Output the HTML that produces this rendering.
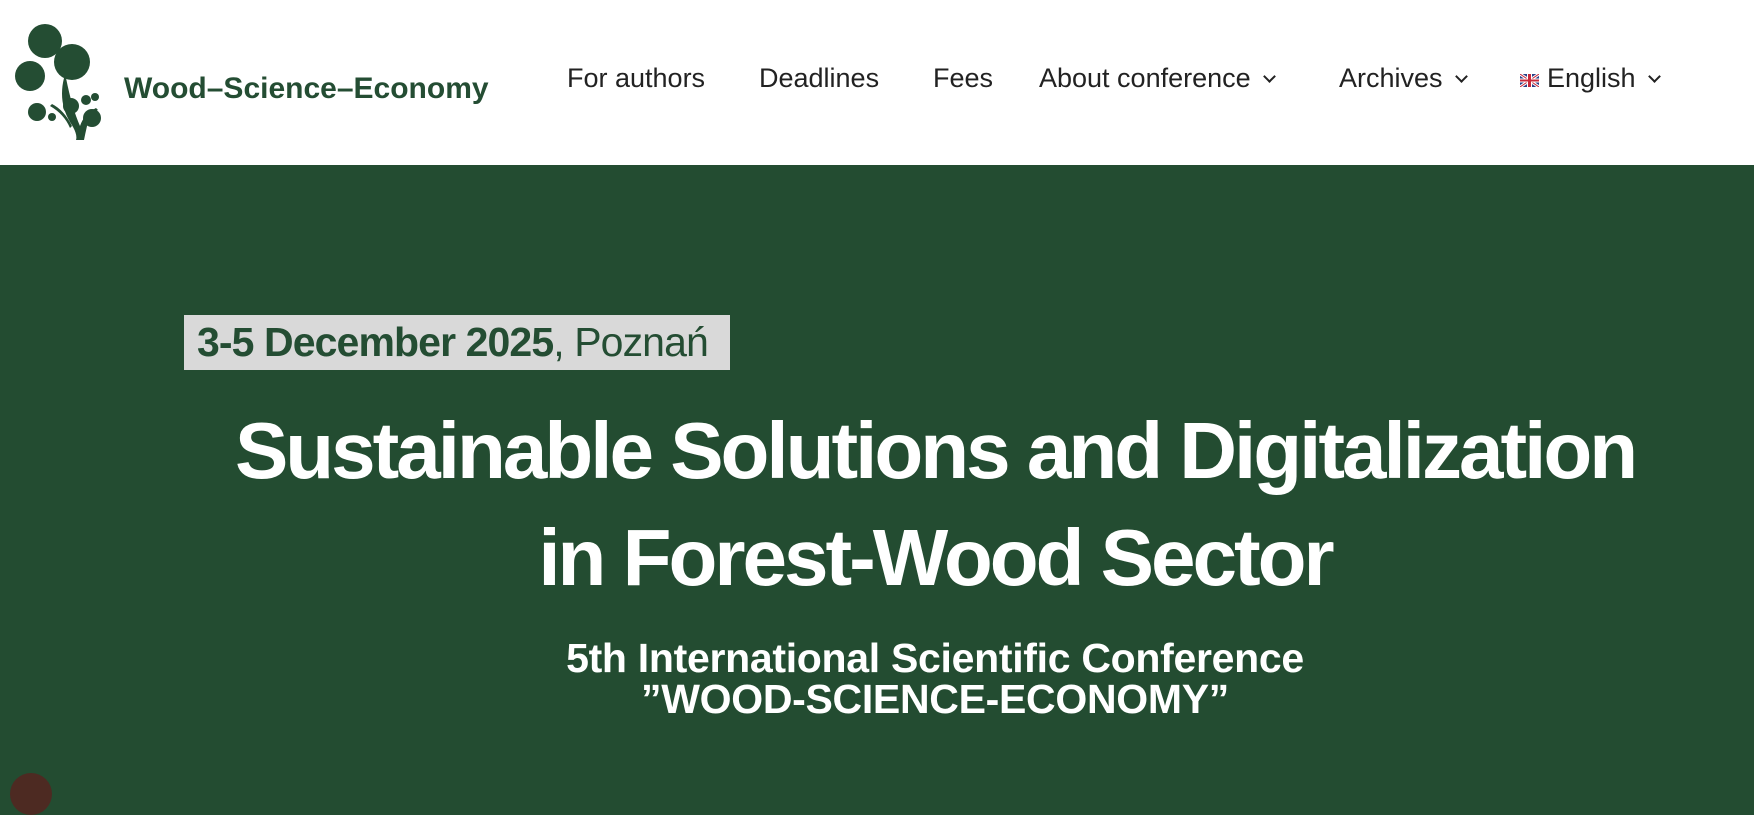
<!DOCTYPE html>
<html><head><meta charset="utf-8"><style>
*{margin:0;padding:0;box-sizing:border-box}
body{width:1754px;height:781px;overflow:hidden;font-family:"Liberation Sans",sans-serif;background:#234c31;position:relative}
.hdr{position:absolute;left:0;top:0;width:1754px;height:165px;background:#fff}
.logo{position:absolute;left:14px;top:22px}
.brand{position:absolute;left:124px;top:72px;font-size:30px;font-weight:bold;color:#244d33;letter-spacing:0px}
.nav{position:absolute;top:63px;font-size:27px;color:#222;white-space:nowrap}
.chev{display:inline-block;width:9px;height:9px;border-right:2px solid #222;border-bottom:2px solid #222;transform:rotate(45deg);margin-left:14px;position:relative;top:-6px}
.date{position:absolute;left:184px;top:315px;width:546px;height:55px;background:#d9d9d9;color:#244d33;font-size:41px;line-height:55px;padding-left:13px;letter-spacing:-0.9px;white-space:nowrap}
.h1{position:absolute;left:0;width:1754px;text-align:center;color:#fff;font-weight:bold;font-size:80px;letter-spacing:-3px;white-space:nowrap;padding-left:116px}
.sub{position:absolute;left:0;width:1754px;text-align:center;color:#fff;font-weight:bold;font-size:41px;letter-spacing:-0.3px;white-space:nowrap;padding-left:116px}
.dot{position:absolute;left:10px;top:773px;width:42px;height:42px;border-radius:50%;background:#4d2a22}
</style></head><body>
<div class="hdr">
<svg class="logo" width="90" height="118" viewBox="0 0 90 118">
<circle cx="31" cy="19" r="17" fill="#244d33"/>
<circle cx="58" cy="40" r="18" fill="#244d33"/>
<circle cx="16" cy="54" r="15" fill="#244d33"/>
<circle cx="23" cy="90" r="9" fill="#244d33"/>
<circle cx="38" cy="95" r="4" fill="#244d33"/>
<circle cx="57" cy="84" r="8" fill="#244d33"/>
<circle cx="72" cy="78" r="5" fill="#244d33"/>
<circle cx="81" cy="75" r="4" fill="#244d33"/>
<circle cx="78" cy="96" r="9" fill="#244d33"/>
<path d="M50 56 Q44 80 56 100 Q64 112 62 118 L70 118 Q72 108 74 100 Q78 90 84 88 L82 86 Q70 92 66 104 Q58 86 52 56 Z" fill="#244d33"/>
<path d="M38 82 Q50 88 58 104 L56 106 Q50 92 36 84 Z" fill="#244d33"/>
</svg>
<div class="brand">Wood–Science–Economy</div>
<div class="nav" style="left:567px">For authors</div>
<div class="nav" style="left:759px">Deadlines</div>
<div class="nav" style="left:933px">Fees</div>
<div class="nav" style="left:1039px">About conference<span class="chev"></span></div>
<div class="nav" style="left:1339px">Archives<span class="chev"></span></div>
<div class="nav" style="left:1520px"><svg width="19" height="13" viewBox="0 0 19 13" style="margin-right:8px"><rect width="19" height="13" fill="#2a3f86"/><path d="M0 0L19 13M19 0L0 13" stroke="#fff" stroke-width="3"/><path d="M0 0L19 13M19 0L0 13" stroke="#c8283a" stroke-width="1"/><rect x="7" width="5" height="13" fill="#fff"/><rect y="4.5" width="19" height="4" fill="#fff"/><rect x="8" width="3" height="13" fill="#c8283a"/><rect y="5.5" width="19" height="2" fill="#c8283a"/></svg>English<span class="chev"></span></div>
</div>
<div class="date"><b>3-5 December 2025</b>, Poznań</div>
<div class="h1" style="top:405px">Sustainable Solutions and Digitalization</div>
<div class="h1" style="top:512px">in Forest-Wood Sector</div>
<div class="sub" style="top:635px">5th International Scientific Conference</div>
<div class="sub" style="top:676px">”WOOD-SCIENCE-ECONOMY”</div>
<div class="dot"></div>
</body></html>
